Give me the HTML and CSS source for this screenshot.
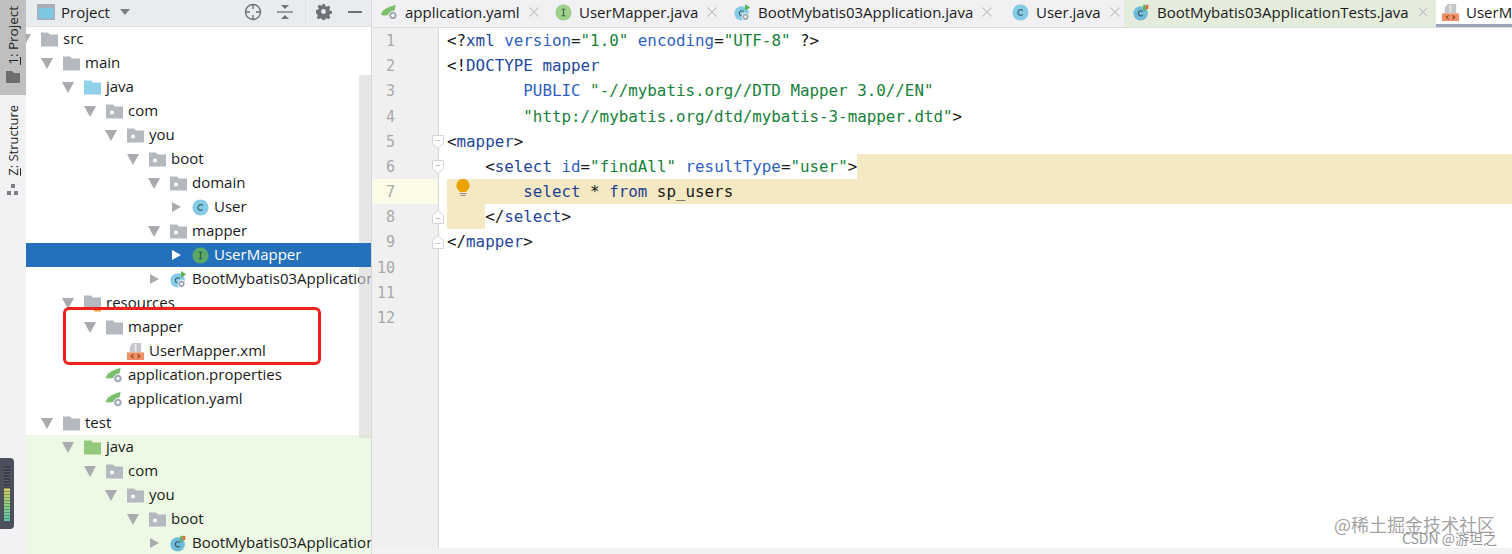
FILE: index.html
```html
<!DOCTYPE html>
<html lang="en">
<head>
    <meta charset="UTF-8">
    <title>UserMapper.xml</title>
    <link rel="stylesheet" href="styles.css">
</head>
<body>
    <svg class="defs" width="0" height="0">
        <symbol id="folder" viewBox="0 0 17 14"><path d="M0 0h7l2 2h8v12H0z" fill="#b4b8bf"/></symbol>
        <symbol id="folder-blue" viewBox="0 0 17 14"><path d="M0 0h7l2 2h8v12H0z" fill="#8fd0ea"/></symbol>
        <symbol id="folder-green" viewBox="0 0 17 14"><path d="M0 0h7l2 2h8v12H0z" fill="#93c97c"/></symbol>
        <symbol id="package" viewBox="0 0 17 14"><path d="M0 0h7l2 2h8v12H0z" fill="#b4b8bf"/><circle cx="6" cy="8" r="2" fill="#fff"/></symbol>
        <symbol id="resources" viewBox="0 0 17 16"><path d="M0 0h7l2 2h8v12H0z" fill="#b4b8bf"/><path d="M10 14h7v2h-7z" fill="#f0a732"/></symbol>
        <symbol id="cls" viewBox="0 0 18 18"><circle cx="9" cy="9" r="8.5" fill="#86cbe6"/><path d="M11.5 7a3 3 0 1 0 0 4" fill="none" stroke="#3c6478" stroke-width="1.3"/></symbol>
        <symbol id="iface" viewBox="0 0 18 18"><circle cx="9" cy="9" r="8.5" fill="#5aa86a"/><path d="M7 5.5h4M7 12.5h4M9 5.5v7" fill="none" stroke="#2e5a38" stroke-width="1.2"/></symbol>
        <symbol id="iface-tab" viewBox="0 0 18 18"><circle cx="9" cy="9" r="8.5" fill="#9fcf8d"/><path d="M7 5.5h4M7 12.5h4M9 5.5v7" fill="none" stroke="#3d6a3a" stroke-width="1.2"/></symbol>
        <symbol id="app" viewBox="0 0 20 20"><circle cx="9" cy="11" r="8.5" fill="#86cbe6"/><path d="M11.5 9a3 3 0 1 0 0 4" fill="none" stroke="#3c6478" stroke-width="1.3"/><path d="M13 0l6 4-6 4z" fill="#5bb050"/><circle cx="13.5" cy="15" r="4.3" fill="#9aa6b4" stroke="#fff"/><circle cx="13.5" cy="15" r="1.6" fill="#fff"/></symbol>
        <symbol id="app-test" viewBox="0 0 20 20"><circle cx="9" cy="11" r="8.5" fill="#6fbcd8"/><path d="M11.5 9a3 3 0 1 0 0 4" fill="none" stroke="#2f566a" stroke-width="1.3"/><path d="M12 1h3v7h-3z" fill="#5bb050"/><path d="M15 1h3v5h-3z" fill="#e0683c"/></symbol>
        <symbol id="spring" viewBox="0 0 20 18"><path d="M0 12C1 5 9 3 17 0c0 7-3 11-8 12-3 .6-6 1-9 0z" fill="#7cbf6a"/><circle cx="14" cy="12.500" r="5" fill="#a2acb8" stroke="#fff"/><circle cx="14" cy="12.500" r="1.900" fill="#fff"/></symbol>
        <symbol id="xml" viewBox="0 0 18 18"><path d="M6 0h9v10H3V4z" fill="#c4c6ca"/><path d="M8 1h2v8H8z" fill="#fff" opacity=".6"/><path d="M0 10h18v8H0z" fill="#ee8f66"/><path d="M7 12l-2.500 2 2.500 2M11 12l2.500 2-2.500 2" fill="none" stroke="#8a3a1c" stroke-width="1.100"/></symbol>
        <symbol id="close" viewBox="0 0 10 10"><path d="M0.500 0.500l9 9M9.500 0.500l-9 9" stroke="#c4c6c8" stroke-width="1.100"/></symbol>
        <symbol id="fold-open" viewBox="0 0 12 14"><path d="M.5.5h11v8L6 13.500.5 8.500z" fill="#fff" stroke="#d4d4d4"/><path d="M3.500 5.500h5" stroke="#c4c4c4"/></symbol>
        <symbol id="fold-end" viewBox="0 0 12 14"><path d="M.5 13.500h11v-8L6 .5.500 5.500z" fill="#fff" stroke="#d4d4d4"/><path d="M3.500 8.500h5" stroke="#c4c4c4"/></symbol>
    </svg>

    <div class="app">
        <div class="strip">
            <div class="strip-tab active">
                <span class="strip-label"><u>1</u>: Project</span>
                <svg width="14" height="12" viewBox="0 0 14 12"><path d="M0 0h6l2 2h6v10H0z" fill="#6e6e6e"/></svg>
            </div>
            <div class="strip-tab">
                <span class="strip-label"><u>Z</u>: Structure</span>
                <svg width="12" height="12" viewBox="0 0 12 12"><path d="M4 0h4v4H4zM0 7h4v4H0zM7 7h4v4H7z" fill="#7a7e84"/></svg>
            </div>
        </div>

        <div class="panel">
            <div class="panel-head">
                <svg class="panel-icon" width="18" height="16" viewBox="0 0 18 16"><path d="M0 0h18v16H0z" fill="#a9aeb6"/><path d="M1.500 4h15v10.500h-15z" fill="#7cc8e0"/></svg>
                <span class="panel-title">Project</span>
                <svg class="panel-caret" width="10" height="6" viewBox="0 0 10 6"><path d="M0 0h10L5 6z" fill="#7a7e84"/></svg>
                <svg class="tool locate" width="18" height="18" viewBox="0 0 18 18"><circle cx="9" cy="9" r="7.500" fill="none" stroke="#6e7177" stroke-width="1.400"/><path d="M9 1v5M9 12v5M1 9h5M12 9h5" stroke="#6e7177" stroke-width="1.400"/></svg>
                <svg class="tool collapse" width="16" height="16" viewBox="0 0 16 16"><path d="M0 8h16" stroke="#6e7177" stroke-width="1.300"/><path d="M4 1h8L8 5zM4 15h8l-4-4z" fill="#6e7177"/></svg>
                <span class="tool-sep"></span>
                <svg class="tool gear" width="16" height="16" viewBox="0 0 16 16"><path d="M6.500 0h3l.4 2.200 1.500.7 1.900-1.200 2 2-1.200 1.900.7 1.500 2.200.4v3l-2.200.4-.7 1.500 1.200 1.900-2 2-1.900-1.200-1.500.7-.4 2.200h-3l-.4-2.200-1.500-.7-1.900 1.200-2-2 1.200-1.900-.7-1.500L0 9.500v-3l2.200-.4.700-1.500-1.200-1.900 2-2 1.900 1.200 1.500-.7z" fill="#6e7177" transform="scale(.94)"/><circle cx="7.500" cy="7.500" r="2.400" fill="#e9ecef"/></svg>
                <span class="tool minimize"></span>
            </div>

            <div class="tree">
                <div class="row lv0"><i class="arrow open first"></i><svg class="ico"><use href="#folder"/></svg><span>src</span></div>
                <div class="row lv1"><i class="arrow open"></i><svg class="ico"><use href="#folder"/></svg><span>main</span></div>
                <div class="row lv2"><i class="arrow open"></i><svg class="ico"><use href="#folder-blue"/></svg><span>java</span></div>
                <div class="row lv3"><i class="arrow open"></i><svg class="ico"><use href="#package"/></svg><span>com</span></div>
                <div class="row lv4"><i class="arrow open"></i><svg class="ico"><use href="#package"/></svg><span>you</span></div>
                <div class="row lv5"><i class="arrow open"></i><svg class="ico"><use href="#package"/></svg><span>boot</span></div>
                <div class="row lv6"><i class="arrow open"></i><svg class="ico"><use href="#package"/></svg><span>domain</span></div>
                <div class="row lv7"><i class="arrow closed"></i><svg class="ico"><use href="#cls"/></svg><span>User</span></div>
                <div class="row lv6"><i class="arrow open"></i><svg class="ico"><use href="#package"/></svg><span>mapper</span></div>
                <div class="row lv7 selected"><i class="arrow closed"></i><svg class="ico"><use href="#iface"/></svg><span>UserMapper</span></div>
                <div class="row lv6"><i class="arrow closed"></i><svg class="ico"><use href="#app"/></svg><span>BootMybatis03Application</span></div>
                <div class="row lv2"><i class="arrow open"></i><svg class="ico"><use href="#resources"/></svg><span>resources</span></div>
                <div class="row lv3"><i class="arrow open"></i><svg class="ico"><use href="#folder"/></svg><span>mapper</span></div>
                <div class="row lv4"><i class="arrow none"></i><svg class="ico"><use href="#xml"/></svg><span>UserMapper.xml</span></div>
                <div class="row lv3"><i class="arrow none"></i><svg class="ico"><use href="#spring"/></svg><span>application.properties</span></div>
                <div class="row lv3"><i class="arrow none"></i><svg class="ico"><use href="#spring"/></svg><span>application.yaml</span></div>
                <div class="row lv1"><i class="arrow open"></i><svg class="ico"><use href="#folder"/></svg><span>test</span></div>
                <div class="test-rows">
                    <div class="row lv2"><i class="arrow open"></i><svg class="ico"><use href="#folder-green"/></svg><span>java</span></div>
                    <div class="row lv3"><i class="arrow open"></i><svg class="ico"><use href="#package"/></svg><span>com</span></div>
                    <div class="row lv4"><i class="arrow open"></i><svg class="ico"><use href="#package"/></svg><span>you</span></div>
                    <div class="row lv5"><i class="arrow open"></i><svg class="ico"><use href="#package"/></svg><span>boot</span></div>
                    <div class="row lv6"><i class="arrow closed"></i><svg class="ico"><use href="#app-test"/></svg><span>BootMybatis03ApplicationTests</span></div>
                </div>
                <div class="scrollbar"></div>
                <div class="callout"></div>
            </div>
        </div>

        <div class="editor">
            <div class="tabs">
                <div class="tab tab-yaml"><svg class="tab-ico"><use href="#spring"/></svg><span>application.yaml</span><svg class="x"><use href="#close"/></svg></div>
                <div class="tab tab-mapper"><svg class="tab-ico"><use href="#iface-tab"/></svg><span>UserMapper.java</span><svg class="x"><use href="#close"/></svg></div>
                <div class="tab tab-app"><svg class="tab-ico"><use href="#app"/></svg><span>BootMybatis03Application.java</span><svg class="x"><use href="#close"/></svg></div>
                <div class="tab tab-user"><svg class="tab-ico"><use href="#cls"/></svg><span>User.java</span><svg class="x"><use href="#close"/></svg></div>
                <div class="tab tab-test"><svg class="tab-ico"><use href="#app-test"/></svg><span>BootMybatis03ApplicationTests.java</span><svg class="x"><use href="#close"/></svg></div>
                <div class="tab tab-xml"><svg class="tab-ico"><use href="#xml"/></svg><span>UserMapper.xml</span></div>
            </div>

            <div class="body">
                <div class="gutter">
                    <div class="num">1</div>
                    <div class="num">2</div>
                    <div class="num">3</div>
                    <div class="num">4</div>
                    <div class="num">5<svg class="fold"><use href="#fold-open"/></svg></div>
                    <div class="num">6<svg class="fold"><use href="#fold-open"/></svg></div>
                    <div class="num current">7</div>
                    <div class="num">8<svg class="fold"><use href="#fold-end"/></svg></div>
                    <div class="num">9<svg class="fold"><use href="#fold-end"/></svg></div>
                    <div class="num">10</div>
                    <div class="num">11</div>
                    <div class="num">12</div>
                </div>
                <div class="code">
                    <div class="line"><span>&lt;?<b class="tag">xml</b> <b class="attr">version</b>=<b class="str">"1.0"</b> <b class="attr">encoding</b>=<b class="str">"UTF-8"</b> ?&gt;</span></div>
                    <div class="line"><span>&lt;!<b class="tag">DOCTYPE mapper</b></span></div>
                    <div class="line"><span>        <b class="attr">PUBLIC</b> <b class="str">"-//mybatis.org//DTD Mapper 3.0//EN"</b></span></div>
                    <div class="line"><span>        <b class="str">"http://mybatis.org/dtd/mybatis-3-mapper.dtd"</b>&gt;</span></div>
                    <div class="line"><span>&lt;<b class="tag">mapper</b>&gt;</span></div>
                    <div class="line"><span>    &lt;<b class="tag">select</b> <b class="attr">id</b>=<b class="str">"findAll"</b> <b class="attr">resultType</b>=<b class="str">"user"</b>&gt;</span><span class="fill"></span></div>
                    <div class="line warn">
                        <svg class="bulb" width="14" height="18" viewBox="0 0 14 18"><path d="M7 0a6.500 6.500 0 0 1 3.500 12v1h-7v-1A6.500 6.500 0 0 1 7 0z" fill="#eda200"/><path d="M3.500 14.500h7M4.500 16.500h5" stroke="#8c8c8c" stroke-width="1.200"/></svg>
                        <span>        <b class="kw">select</b> * <b class="kw">from</b> sp_users</span>
                    </div>
                    <div class="line"><span class="hl">    </span><span>&lt;/<b class="tag">select</b>&gt;</span></div>
                    <div class="line"><span>&lt;/<b class="tag">mapper</b>&gt;</span></div>
                </div>
            </div>
            <div class="status"></div>
        </div>
    </div>

    <div class="meter">
        <div class="meter-off"></div>
        <div class="meter-on"></div>
    </div>
    <div class="mark">
        <div class="mark-a">@稀土掘金技术社区</div>
        <div class="mark-b">CSDN @游坦之</div>
    </div>
</body>
</html>
```

FILE: styles.css
```css
* {
    box-sizing: border-box;
}
body {
    margin: 0;
    height: 554px;
    overflow: hidden;
    position: relative;
    background-color: #fff;
    font-family: 'Open Sans', 'Noto Sans', sans-serif;
    font-size: 15px;
    color: #1a1a1a;
}
.defs {
    position: absolute;
}
.app {
    display: flex;
    height: 554px;
}

/* left tool strip */
.strip {
    width: 26px;
    flex: none;
    background-color: #f2f2f4;
    display: flex;
    flex-direction: column;
}
.strip-tab {
    display: flex;
    flex-direction: column;
    align-items: center;
    gap: 8px;
    padding-top: 10px;
    font-size: 13px;
}
.strip-tab.active {
    height: 95px;
    background-color: #bfbfbf;
    padding-top: 6px;
    gap: 6px;
    font-size: 13.5px;
}
.strip-label {
    writing-mode: vertical-rl;
    transform: rotate(180deg);
    white-space: nowrap;
    color: #222;
}

/* project panel */
.panel {
    width: 346px;
    flex: none;
    display: flex;
    flex-direction: column;
    border-right: 1px solid #d8d8d8;
}
.panel-head {
    height: 27px;
    flex: none;
    display: flex;
    align-items: center;
    background-color: #e9ecef;
    border-bottom: 1px solid #dcdfe3;
    padding: 0 0 3px 11px;
}
.panel-icon {
    margin-right: 6px;
}
.panel-caret {
    margin-left: 10px;
}
.panel-title {
    font-size: 15px;
}
.locate {
    margin-left: 114px;
}
.collapse {
    margin-left: 15px;
}
.tool-sep {
    width: 1px;
    height: 24px;
    margin: 0 10px 0 12px;
    background-color: #dcdfe3;
}
.minimize {
    width: 14px;
    height: 2px;
    margin-left: 16px;
    background-color: #6e7177;
}
.tree {
    position: relative;
    flex: 1;
    overflow: hidden;
}
.row {
    height: 24px;
    display: flex;
    align-items: center;
    white-space: nowrap;
}
.row span {
    margin-top: -2px;
}
.row.selected {
    position: relative;
    z-index: 1;
    background-color: #2470bb;
    color: #fff;
}
.test-rows {
    background-color: #edf9e4;
    height: 130px;
}
.lv0 { padding-left: 0; }
.lv1 { padding-left: 14px; }
.lv2 { padding-left: 35px; }
.lv3 { padding-left: 57px; }
.lv4 { padding-left: 78px; }
.lv5 { padding-left: 100px; }
.lv6 { padding-left: 121px; }
.lv7 { padding-left: 143px; }
.arrow {
    width: 14px;
    height: 12px;
    flex: none;
    margin-right: 9px;
}
.arrow.open {
    border-left: 6px solid transparent;
    border-right: 6px solid transparent;
    border-top: 11px solid #a9abae;
    width: 12px;
    height: 11px;
    margin-left: 1px;
    margin-right: 10px;
}
.arrow.open.first {
    margin-left: -7px;
}
.arrow.closed {
    border-top: 5px solid transparent;
    border-bottom: 5px solid transparent;
    border-left: 9px solid #a9abae;
    width: 9px;
    height: 10px;
    margin-left: 3px;
    margin-right: 11px;
}
.selected .arrow.closed {
    border-left-color: #fff;
}
.ico {
    width: 17px;
    height: 17px;
    flex: none;
    margin-right: 5px;
}
.scrollbar {
    position: absolute;
    right: 0;
    top: 48px;
    width: 12px;
    height: 363px;
    background-color: rgba(214, 214, 214, 0.6);
}
.callout {
    position: absolute;
    z-index: 2;
    left: 37px;
    top: 280px;
    width: 258px;
    height: 58px;
    border: 3px solid #f0201c;
    border-radius: 6px;
}

/* editor */
.editor {
    flex: 1;
    min-width: 0;
    display: flex;
    flex-direction: column;
}
.tabs {
    height: 28px;
    flex: none;
    display: flex;
    background-color: #f1f1f3;
    border-bottom: 1px solid #dcdcdc;
    overflow: hidden;
    white-space: nowrap;
}
.tab {
    display: flex;
    align-items: center;
    flex: none;
    height: 27px;
    padding: 0 0 3px 9px;
}
.tab-yaml { width: 174px; }
.tab-mapper { width: 179px; }
.tab-app { width: 278px; }
.tab-user { width: 121px; }
.tab-test {
    width: 312px;
    background-color: #e4ecdc;
}
.tab-xml {
    width: 200px;
    padding-left: 6px;
    background-color: #fff;
    box-shadow: inset 0 -3px 0 #9ea3bb;
}
.tab-ico {
    width: 17px;
    height: 17px;
    margin-right: 7px;
    flex: none;
}
.x {
    width: 10px;
    height: 10px;
    margin-left: 9px;
    flex: none;
}
.body {
    flex: 1;
    display: flex;
    min-height: 0;
}
.gutter {
    width: 67px;
    flex: none;
    background-color: #f0f0f0;
    border-right: 1px solid #d6d6d6;
}
.num {
    position: relative;
    height: 25.18px;
    line-height: 25.18px;
    padding: 1px 43px 0 0;
    text-align: right;
    font-family: 'DejaVu Sans Mono', monospace;
    font-size: 15px;
    color: #a8a8a8;
}
.num.current {
    background-color: #fcfbe8;
}
.fold {
    position: absolute;
    right: -6px;
    top: 6px;
    width: 12px;
    height: 14px;
}
.code {
    flex: 1;
    min-width: 0;
    padding-left: 8px;
    font-family: 'DejaVu Sans Mono', monospace;
    font-size: 15.85px;
    color: #1a1a1a;
}
.line {
    position: relative;
    display: flex;
    height: 25.18px;
    line-height: 25.18px;
    white-space: pre;
}
.line b {
    font-weight: normal;
}
.tag { color: #24479c; }
.attr { color: #2f5fc0; }
.str { color: #17803a; }
.kw { color: #1f3f94; }
.hl,
.fill,
.warn {
    background-color: #f5e9c3;
}
.fill {
    flex: 1;
}
.bulb {
    position: absolute;
    left: 9px;
    top: 0;
}
.status {
    height: 6px;
    flex: none;
    background-color: #f2f2f2;
}

/* floating bits */
.meter {
    position: absolute;
    left: 0;
    top: 458px;
    width: 14px;
    height: 71px;
    padding: 8px 4px;
    background-color: #4b505c;
    border-radius: 0 4px 4px 0;
}
.meter-off {
    height: 22px;
    background: repeating-linear-gradient(#3a3d47 0 2px, #5a5e68 2px 3px);
}
.meter-on {
    height: 33px;
    background: repeating-linear-gradient(rgba(60, 60, 70, 0.4) 0 1px, transparent 1px 3px), linear-gradient(#d8d05c, #8fce7c 50%, #58c8b0);
}
.mark {
    position: absolute;
    right: 17px;
    top: 515px;
    font-family: 'Noto Sans CJK SC', 'Open Sans', sans-serif;
    text-align: right;
    line-height: 1;
}
.mark-a {
    font-size: 18px;
    color: rgba(120, 120, 120, 0.7);
}
.mark-b {
    font-size: 14px;
    color: rgba(120, 120, 120, 0.8);
    margin: -2px -2px 0 0;
}
```
